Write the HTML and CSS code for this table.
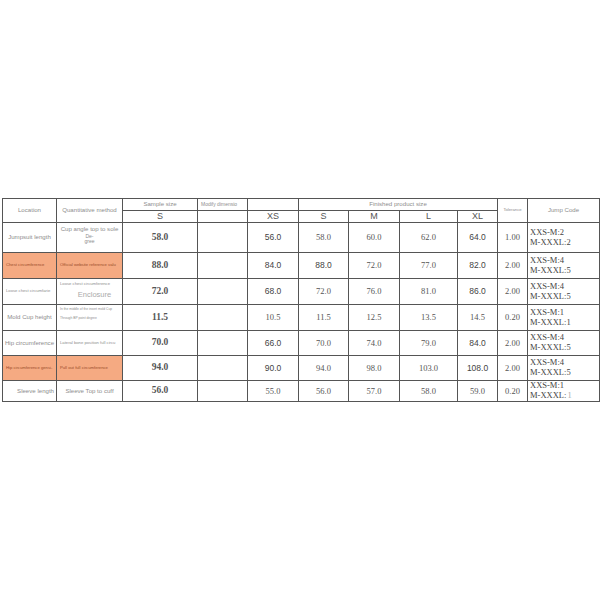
FILE: index.html
```html
<!DOCTYPE html>
<html>
<head>
<meta charset="utf-8">
<link rel="stylesheet" href="styles.css">
</head>
<body>
<table class="spec">
<colgroup>
<col class="c-loc"><col class="c-meth"><col class="c-samp"><col class="c-mod"><col class="c-xs"><col class="c-s"><col class="c-m"><col class="c-l"><col class="c-xl"><col class="c-tol"><col class="c-jump">
</colgroup>
<tr class="h1">
<td rowspan="2" class="lbl">Location</td>
<td rowspan="2" class="lbl">Quantitative method</td>
<td class="lbl">Sample size</td>
<td class="lbl small left">Modify dimensio</td>
<td></td>
<td colspan="4" class="lbl">Finished product size</td>
<td rowspan="2" class="lbl tiny">Tolerance</td>
<td rowspan="2" class="lbl">Jump Code</td>
</tr>
<tr class="h2">
<td class="sz">S</td>
<td></td>
<td class="sz">XS</td>
<td class="sz">S</td>
<td class="sz">M</td>
<td class="sz">L</td>
<td class="sz">XL</td>
</tr>
<tr class="r1">
<td class="lbl">Jumpsuit length</td>
<td class="lbl top"><div>Cup angle top to sole</div><div class="degree">De-<br>gree</div></td>
<td class="samp">58.0</td>
<td></td>
<td class="sans">56.0</td>
<td class="ser">58.0</td>
<td class="ser">60.0</td>
<td class="ser">62.0</td>
<td class="sans">64.0</td>
<td class="ser">1.00</td>
<td class="jump">XXS-M:2<br>M-XXXL:2</td>
</tr>
<tr class="r2">
<td class="hl tiny left">Chest circumference</td>
<td class="hl tiny left">Official website reference valu</td>
<td class="samp">88.0</td>
<td></td>
<td class="sans">84.0</td>
<td class="sans">88.0</td>
<td class="ser">72.0</td>
<td class="ser">77.0</td>
<td class="sans">82.0</td>
<td class="ser">2.00</td>
<td class="jump">XXS-M:4<br>M-XXXL:5</td>
</tr>
<tr class="r3">
<td class="lbl tiny left">Loose chest circumfarie</td>
<td class="lbl top"><div class="tiny left">Loose chest circumference</div><div class="encl">Enclosure</div></td>
<td class="samp">72.0</td>
<td></td>
<td class="sans">68.0</td>
<td class="ser">72.0</td>
<td class="ser">76.0</td>
<td class="ser">81.0</td>
<td class="sans">86.0</td>
<td class="ser">2.00</td>
<td class="jump">XXS-M:4<br>M-XXXL:5</td>
</tr>
<tr class="r4">
<td class="lbl">Mold Cup height</td>
<td class="lbl top"><div class="micro">In the middle of the insert mold Cup</div><div class="micro gap">Through BP point degree</div></td>
<td class="samp">11.5</td>
<td></td>
<td class="ser">10.5</td>
<td class="ser">11.5</td>
<td class="ser">12.5</td>
<td class="ser">13.5</td>
<td class="ser">14.5</td>
<td class="ser">0.20</td>
<td class="jump">XXS-M:1<br>M-XXXL:1</td>
</tr>
<tr class="r5">
<td class="lbl">Hip circumference</td>
<td class="lbl tiny left">Lateral bone position full circu</td>
<td class="samp">70.0</td>
<td></td>
<td class="sans">66.0</td>
<td class="ser">70.0</td>
<td class="ser">74.0</td>
<td class="ser">79.0</td>
<td class="sans">84.0</td>
<td class="ser">2.00</td>
<td class="jump">XXS-M:4<br>M-XXXL:5</td>
</tr>
<tr class="r6">
<td class="hl tiny left">Hip circumference gensi-</td>
<td class="hl tiny left">Pull out full circumference</td>
<td class="samp">94.0</td>
<td></td>
<td class="sans">90.0</td>
<td class="ser">94.0</td>
<td class="ser">98.0</td>
<td class="ser">103.0</td>
<td class="sans">108.0</td>
<td class="ser">2.00</td>
<td class="jump">XXS-M:4<br>M-XXXL:5</td>
</tr>
<tr class="r7">
<td class="lbl right">Sleeve length</td>
<td class="lbl">Sleeve Top to cuff</td>
<td class="samp">56.0</td>
<td></td>
<td class="ser">55.0</td>
<td class="ser">56.0</td>
<td class="ser">57.0</td>
<td class="ser">58.0</td>
<td class="ser">59.0</td>
<td class="ser">0.20</td>
<td class="jump">XXS-M:1<br>M-XXXL:<span class="faint">1</span></td>
</tr>
</table>
</body>
</html>
```

FILE: styles.css
```css
html, body {
  margin: 0;
  padding: 0;
  background: #ffffff;
}
body {
  font-family: "Liberation Sans", Arial, sans-serif;
}
.spec {
  margin: 198px 0 0 2px;
  border-collapse: collapse;
  table-layout: fixed;
  width: 597px;
}
.c-loc { width: 54px; }
.c-meth { width: 66px; }
.c-samp { width: 75px; }
.c-mod { width: 50px; }
.c-xs { width: 51px; }
.c-s { width: 50px; }
.c-m { width: 51px; }
.c-l { width: 58px; }
.c-xl { width: 40px; }
.c-tol { width: 30px; }
.c-jump { width: 72px; }

.spec td {
  border: 1px solid #555555;
  padding: 0;
  text-align: center;
  vertical-align: middle;
  line-height: 1;
  overflow: hidden;
  white-space: nowrap;
}
.h1 { height: 12px; }
.h2 { height: 12px; }
.r1 { height: 30px; }
.r2 { height: 26px; }
.r3 { height: 26px; }
.r4 { height: 26px; }
.r5 { height: 25px; }
.r6 { height: 25px; }
.r7 { height: 21px; }

.lbl {
  font-family: "Liberation Sans", Arial, sans-serif;
  font-size: 6.1px;
  color: #8e8e8e;
}
.small { font-size: 5px; }
.tiny { font-size: 4.2px; }
.micro { font-size: 3.3px; text-align: left; padding-left: 3px; }
.micro.gap { margin-top: 6px; }
.left { text-align: left; padding-left: 3px; }
.spec td.left { text-align: left; padding-left: 3px; }
.spec td.right { text-align: right; padding-right: 2px; }
.spec td.top { vertical-align: top; padding-top: 3px; }
.degree {
  font-size: 5px;
  margin-top: 2px;
  line-height: 1;
}
.encl {
  font-size: 7.5px;
  color: #aaaaaa;
  margin-top: 5px;
  padding-left: 10px;
}
.hl {
  background: #f5aa82;
  color: #9a4a2a;
}
.sz {
  font-family: "Liberation Sans", Arial, sans-serif;
  font-size: 9px;
  color: #555;
}
.samp {
  font-family: "Liberation Serif", "Times New Roman", serif;
  font-weight: bold;
  font-size: 9.5px;
  color: #555;
}
.sans {
  font-family: "Liberation Sans", Arial, sans-serif;
  font-size: 8.5px;
  color: #444;
}
.ser {
  font-family: "Liberation Serif", "Times New Roman", serif;
  font-size: 8.5px;
  color: #555;
}
.spec td.jump {
  font-family: "Liberation Serif", "Times New Roman", serif;
  font-size: 8.5px;
  color: #444;
  text-align: left;
  padding-left: 2px;
  line-height: 1.15;
}
.faint { color: #aaa; padding-left: 1px; }
```
